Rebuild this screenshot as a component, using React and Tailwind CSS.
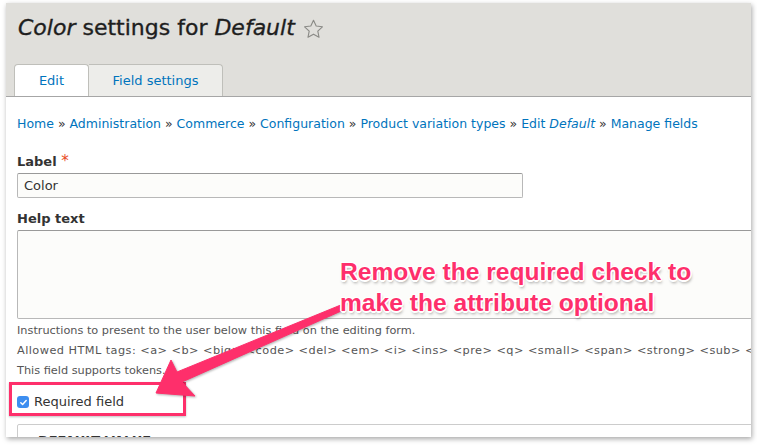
import React from "react";

const FONT = "font-['DejaVu_Sans',sans-serif]";

export default function App() {
  return (
    <div className={`relative w-[757px] h-[446px] bg-white overflow-hidden ${FONT}`}>
      <div className="ml-[6px] mt-[3px] w-[745px] h-[434px] bg-white overflow-hidden flex flex-col shadow-[1px_2px_5px_rgba(0,0,0,0.35)]">
        {/* header */}
        <div className="h-[94px] shrink-0 bg-[#e0dfdb] border-b border-[#a6a6a6] flex flex-col">
          <h1 className="pt-[10px] pl-[12px] text-[22px] leading-[30px] text-[#1e1e1e] font-normal flex items-center [-webkit-text-stroke:0.35px_#1e1e1e]">
            <em className="italic">Color</em>
            <span>&nbsp;settings for&nbsp;</span>
            <em className="italic">Default</em>
            <svg className="ml-[8px] mt-[1px]" width="21" height="20" viewBox="0 0 24 23">
              <path
                d="M12 1.5l3.09 6.6 7.16.86-5.3 4.93 1.4 7.11L12 17.47 5.65 21l1.4-7.11-5.3-4.93 7.16-.86z"
                fill="none"
                stroke="#8a8a86"
                strokeWidth="1.3"
                strokeLinejoin="round"
              />
            </svg>
          </h1>
          <div className="mt-auto pl-[8px] flex items-end">
            <div className="w-[75px] h-[32px] bg-white border border-b-0 border-[#bfbfba] rounded-t-[4px] flex items-center justify-center text-[13px] text-[#0074bd]">
              Edit
            </div>
            <div className="w-[134px] h-[32px] bg-[#ededea] border border-l-0 border-b-0 border-[#bfbfba] rounded-tr-[4px] flex items-center justify-center text-[13px] text-[#0074bd]">
              Field settings
            </div>
          </div>
        </div>

        {/* content */}
        <div className="px-[11px] flex flex-col">
          <div className="pt-[17px] text-[12.5px] leading-[20px] text-[#0074bd] whitespace-nowrap">
            Home <span className="text-[#333]">»</span> Administration <span className="text-[#333]">»</span> Commerce{" "}
            <span className="text-[#333]">»</span> Configuration <span className="text-[#333]">»</span> Product variation types{" "}
            <span className="text-[#333]">»</span> Edit <em className="italic">Default</em> <span className="text-[#333]">»</span> Manage fields
          </div>

          <div className="mt-[18px] text-[13px] leading-[18px] font-bold text-[#333]">
            Label <span className="text-[#e8491d] font-normal text-[15px]">*</span>
          </div>
          <div className="mt-[2px] w-[506px] h-[25px] bg-[#fcfcfa] border border-[#b8b8b8] border-t-[#999] rounded-[2px] flex items-center px-[6px] text-[13px] text-[#333]">
            Color
          </div>

          <div className="mt-[12px] text-[13px] leading-[18px] font-bold text-[#333]">Help text</div>
          <div className="mt-[2px] w-[780px] h-[89px] shrink-0 bg-[#fcfcfa] border border-[#b8b8b8] border-t-[#999] rounded-[2px]" />

          <div className="mt-[2px] text-[11.3px] leading-[20px] text-[#555] whitespace-nowrap">
            <div>Instructions to present to the user below this field on the editing form.</div>
            <div className="tracking-[0.45px]">
              Allowed HTML tags: &lt;a&gt; &lt;b&gt; &lt;big&gt; &lt;code&gt; &lt;del&gt; &lt;em&gt; &lt;i&gt; &lt;ins&gt; &lt;pre&gt; &lt;q&gt; &lt;small&gt; &lt;span&gt; &lt;strong&gt; &lt;sub&gt; &lt;sup&gt; &lt;tt&gt; &lt;ol&gt; &lt;ul&gt; &lt;li&gt;
            </div>
            <div>This field supports tokens.</div>
          </div>

          <div className="mt-[11px] h-[20px] flex items-center gap-[5px] text-[13px] text-[#333]">
            <span className="w-[12px] h-[12px] rounded-[3px] bg-[#3d8ef0] flex items-center justify-center">
              <svg width="9" height="9" viewBox="0 0 10 10">
                <path d="M2 5.3l2 2L8 2.8" fill="none" stroke="white" strokeWidth="1.6" strokeLinecap="round" strokeLinejoin="round" />
              </svg>
            </span>
            Required field
          </div>

          <div className="mt-[12px] w-[760px] h-[40px] border border-[#ccc] rounded-[2px] pt-[7px] pl-[7px] flex items-start gap-[6px] text-[13px] leading-[18px] font-bold text-[#333] uppercase">
            <span className="text-[9px]">▶</span>
            Default value
          </div>
        </div>
      </div>

      {/* annotation rectangle */}
      <div className="absolute left-[9px] top-[382px] w-[177px] h-[34px] border-[3px] border-[#fe2f6b] shadow-[0_1px_2px_rgba(0,0,0,0.25)]" />

      {/* arrow */}
      <svg className="absolute left-0 top-0 pointer-events-none drop-shadow-[1px_1px_1px_rgba(0,0,0,0.3)]" width="757" height="446" viewBox="0 0 757 446">
        <polygon
          points="156,393 171,360 177,372 342,304.5 344.5,309.5 182,382 195,396"
          fill="#fe2f6b"
          strokeLinejoin="round"
          stroke="#fe2f6b"
          strokeWidth="1"
        />
      </svg>

      {/* annotation text */}
      <div className="absolute left-[340px] top-[256px] font-['Liberation_Sans',Arial,sans-serif] font-bold text-[24.6px] leading-[31px] text-[#fe2f6b] whitespace-nowrap [text-shadow:-1.5px_0_0_#fff,1.5px_0_0_#fff,0_-1.5px_0_#fff,0_1.5px_0_#fff,-1px_-1px_0_#fff,1px_-1px_0_#fff,-1px_1px_0_#fff,1px_1px_0_#fff,1px_2.5px_3px_rgba(0,0,0,0.35)]">
        <div>Remove the required check to</div>
        <div>make the attribute optional</div>
      </div>
    </div>
  );
}
